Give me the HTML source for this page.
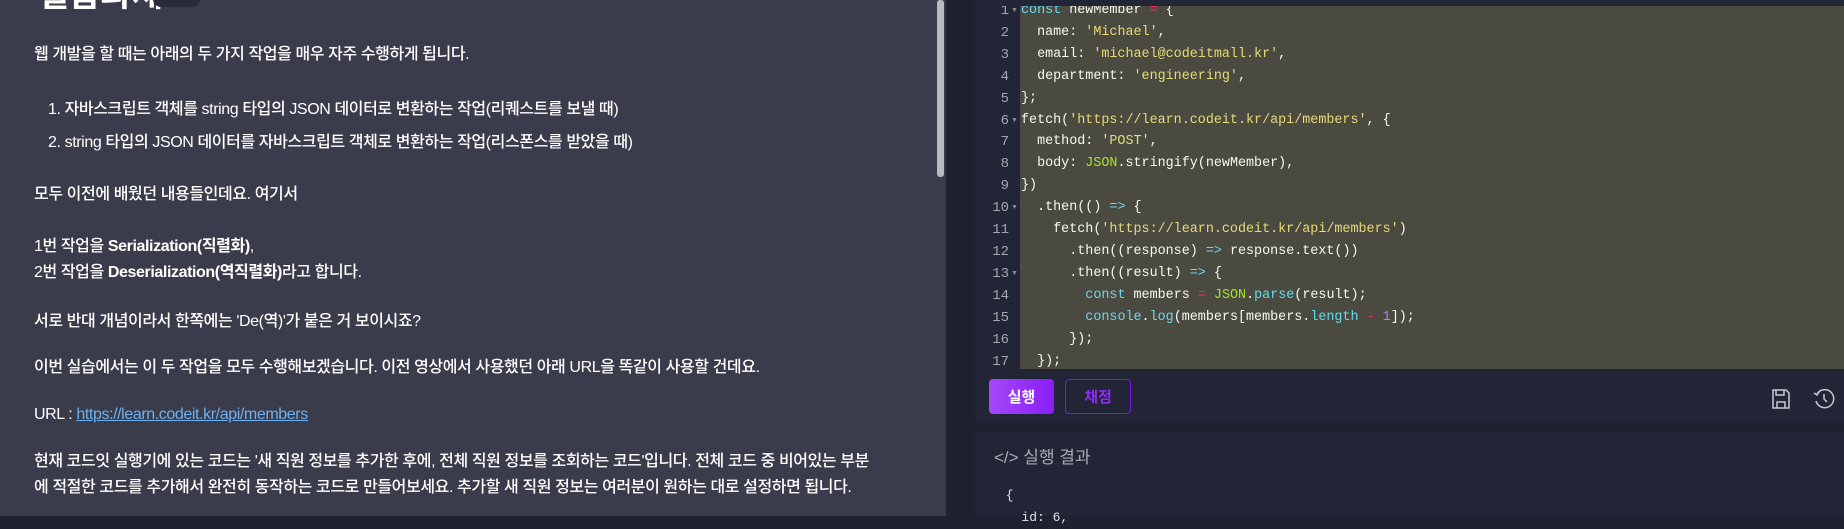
<!DOCTYPE html>
<html><head><meta charset="utf-8"><style>
*{margin:0;padding:0;box-sizing:border-box}
body{width:1844px;height:516px;overflow:hidden;background:#1f2130;position:relative;font-family:"Liberation Sans","Noto Sans CJK KR",sans-serif}
#left{position:absolute;left:0;top:0;width:946px;height:516px;background:#3a3b4b;color:#fff}
#left p{position:absolute;left:34px;font-size:16px;font-weight:500;white-space:nowrap;line-height:20px;letter-spacing:-0.4px}
#left b{font-weight:700}
.sb{position:absolute;left:937px;top:0;width:7px;height:177px;background:#b9bac2;border-radius:3px}
#title{position:absolute;left:38px;top:-33px;font-size:34px;font-weight:700;color:#fff}
#badge{position:absolute;left:153px;top:-10px;width:47px;height:17px;border-radius:8px;background:#2a2b38}
#ed{position:absolute;left:975px;top:0;width:869px;height:369px;background:#4a4a41}
#gut{position:absolute;left:975px;top:0;width:45px;height:369px;background:#232536}
.ln{position:absolute;left:975px;width:34px;text-align:right;font-family:"Liberation Mono",monospace;font-size:14px;color:#a3a5b0;height:22px;line-height:22px}
.fd{position:absolute;left:1011px;font-size:7px;color:#8a8c96}
.cl{position:absolute;left:1021px;font-family:"Liberation Mono",monospace;font-size:13.4px;color:#f8f8f2;white-space:pre;height:22px;line-height:22px}
.k{color:#66d9ef}.s{color:#e6db74}.o{color:#f92672}.g{color:#a6e22e}.n{color:#ae81ff}
#topband{position:absolute;left:975px;top:0;width:869px;height:6px;background:#222536}
#tb{position:absolute;left:975px;top:369px;width:869px;height:52px;background:#222536}
#out{position:absolute;left:975px;top:431px;width:869px;height:85px;background:#222536}
.btn{position:absolute;top:379px;height:35px;border-radius:4px;font-size:15px;font-weight:700;display:flex;align-items:center;justify-content:center}
</style></head><body>
<div id="left">
<div id="title">실습과제</div><div id="badge"></div>
<p style="top:45px">웹 개발을 할 때는 아래의 두 가지 작업을 매우 자주 수행하게 됩니다.</p>
<p style="top:100px;left:48px">1. 자바스크립트 객체를 string 타입의 JSON 데이터로 변환하는 작업(리퀘스트를 보낼 때)</p>
<p style="top:133px;left:48px">2. string 타입의 JSON 데이터를 자바스크립트 객체로 변환하는 작업(리스폰스를 받았을 때)</p>
<p style="top:185px">모두 이전에 배웠던 내용들인데요. 여기서</p>
<p style="top:237px">1번 작업을 <b>Serialization(직렬화)</b>,</p>
<p style="top:263px">2번 작업을 <b>Deserialization(역직렬화)</b>라고 합니다.</p>
<p style="top:312px">서로 반대 개념이라서 한쪽에는 'De(역)'가 붙은 거 보이시죠?</p>
<p style="top:358px">이번 실습에서는 이 두 작업을 모두 수행해보겠습니다. 이전 영상에서 사용했던 아래 URL을 똑같이 사용할 건데요.</p>
<p style="top:405px">URL : <span style="color:#6fb0f0;text-decoration:underline">https://learn.codeit.kr/api/members</span></p>
<p style="top:452px">현재 코드잇 실행기에 있는 코드는 '새 직원 정보를 추가한 후에, 전체 직원 정보를 조회하는 코드'입니다. 전체 코드 중 비어있는 부분</p>
<p style="top:478px">에 적절한 코드를 추가해서 완전히 동작하는 코드로 만들어보세요. 추가할 새 직원 정보는 여러분이 원하는 대로 설정하면 됩니다.</p>
<div class="sb"></div>
</div>
<div id="ed"></div><div id="gut"></div>
<div class="ln" style="top:0">1</div><div class="ln" style="top:22px">2</div><div class="ln" style="top:44px">3</div><div class="ln" style="top:66px">4</div><div class="ln" style="top:88px">5</div><div class="ln" style="top:110px">6</div><div class="ln" style="top:131px">7</div><div class="ln" style="top:153px">8</div><div class="ln" style="top:175px">9</div><div class="ln" style="top:197px">10</div><div class="ln" style="top:219px">11</div><div class="ln" style="top:241px">12</div><div class="ln" style="top:263px">13</div><div class="ln" style="top:285px">14</div><div class="ln" style="top:307px">15</div><div class="ln" style="top:329px">16</div><div class="ln" style="top:351px">17</div>
<div class="fd" style="top:7px">▼</div><div class="fd" style="top:117px">▼</div><div class="fd" style="top:204px">▼</div><div class="fd" style="top:270px">▼</div>
<div class="cl" style="top:0"><span class="k">const</span> newMember <span class="o">=</span> {</div>
<div class="cl" style="top:22px">  name: <span class="s">'Michael'</span>,</div>
<div class="cl" style="top:44px">  email: <span class="s">'michael@codeitmall.kr'</span>,</div>
<div class="cl" style="top:66px">  department: <span class="s">'engineering'</span>,</div>
<div class="cl" style="top:88px">};</div>
<div class="cl" style="top:110px">fetch(<span class="s">'https://learn.codeit.kr/api/members'</span>, {</div>
<div class="cl" style="top:131px">  method: <span class="s">'POST'</span>,</div>
<div class="cl" style="top:153px">  body: <span class="g">JSON</span>.stringify(newMember),</div>
<div class="cl" style="top:175px">})</div>
<div class="cl" style="top:197px">  .then(() <span class="k">=&gt;</span> {</div>
<div class="cl" style="top:219px">    fetch(<span class="s">'https://learn.codeit.kr/api/members'</span>)</div>
<div class="cl" style="top:241px">      .then((response) <span class="k">=&gt;</span> response.text())</div>
<div class="cl" style="top:263px">      .then((result) <span class="k">=&gt;</span> {</div>
<div class="cl" style="top:285px">        <span class="k">const</span> members <span class="o">=</span> <span class="g">JSON</span>.<span class="k">parse</span>(result);</div>
<div class="cl" style="top:307px">        <span class="k">console</span>.<span class="k">log</span>(members[members.<span class="k">length</span> <span class="o">-</span> <span class="n">1</span>]);</div>
<div class="cl" style="top:329px">      });</div>
<div class="cl" style="top:351px">  });</div>
<div id="topband"></div>
<div id="tb"></div>
<div class="btn" style="left:989px;width:65px;background:linear-gradient(90deg,#a449f8,#8a1df5);color:#fff">실행</div>
<div class="btn" style="left:1065px;width:66px;border:1.5px solid #7a18e8;color:#8c2cf5">채점</div>
<svg style="position:absolute;left:1770px;top:389px" width="22" height="20" viewBox="0 0 22 20" fill="none" stroke="#c8c9d0" stroke-width="1.5"><path d="M3 1h13l3 3v15H3z"/><path d="M6 1v5h8V1"/><path d="M7 19v-6h8v6"/></svg>
<svg style="position:absolute;left:1812px;top:387px" width="24" height="24" viewBox="0 0 24 24" fill="none" stroke="#c8c9d0" stroke-width="1.5"><path d="M5 7A9 9 0 1 1 4 14"/><path d="M2 6l3 2 2-3"/><path d="M12 7v5l3 3"/></svg>
<div id="out"></div>
<div style="position:absolute;left:994px;top:443px;color:#a8aab4;font-size:17px">&lt;/&gt; 실행 결과</div>
<div style="position:absolute;left:998px;top:485px;color:#e0e0e6;font-family:'Liberation Mono',monospace;font-size:13px;line-height:22px;white-space:pre"> {
   id: 6,</div>
</body></html>
